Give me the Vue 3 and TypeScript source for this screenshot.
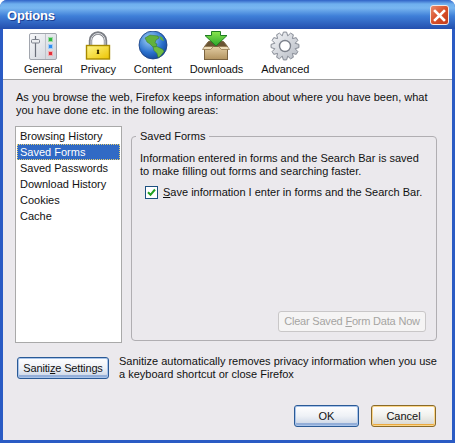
<template>
  <div class="dialog">
    <header class="titlebar">
      <span class="title">Options</span>
      <button class="close" aria-label="Close">
        <svg width="13" height="13" viewBox="0 0 13 13">
          <path d="M2 2l9 9M11 2l-9 9" stroke="#fff" stroke-width="2.6" stroke-linecap="square" />
        </svg>
      </button>
    </header>

    <div class="client">
      <nav class="toolbar">
        <div class="tool">
          <svg width="30" height="30" viewBox="0 0 30 30">
            <defs>
              <linearGradient id="panel" x1="0" y1="0" x2="1" y2="1">
                <stop offset="0" stop-color="#f8f9fb" />
                <stop offset="1" stop-color="#ccd0d8" />
              </linearGradient>
            </defs>
            <rect x="1.500" y="2.500" width="27" height="26" rx="1.500" fill="url(#panel)" stroke="#a2a6ae" />
            <path d="M17.500 3v25" stroke="#c0c3ca" />
            <path d="M7.500 5v21" stroke="#6a6f7a" stroke-width="1.200" />
            <rect x="3.500" y="8.500" width="8" height="3.500" rx="1" fill="#eceef1" stroke="#7c818b" />
            <rect x="20.500" y="6.500" width="4" height="4" fill="#2fb83f" stroke="#9fd8a6" />
            <rect x="20.500" y="13.500" width="4" height="4" fill="#2e8cf0" stroke="#a4cdf4" />
            <rect x="20.500" y="20.500" width="4" height="4" fill="#e2303a" stroke="#f0aeb2" />
          </svg>
          <span>General</span>
        </div>
        <div class="tool">
          <svg width="30" height="30" viewBox="0 0 30 30">
            <defs>
              <linearGradient id="lock" x1="0" y1="0" x2="1" y2="1">
                <stop offset="0" stop-color="#fff68a" />
                <stop offset="1" stop-color="#ecc400" />
              </linearGradient>
            </defs>
            <path d="M7.500 15V9.500a7.500 7.500 0 0 1 15 0V15" fill="none" stroke="#7c7f85" stroke-width="3.400" />
            <path d="M8 15V9.500a7 7 0 0 1 14 0V15" fill="none" stroke="#dcdee2" stroke-width="1" />
            <rect x="3.500" y="14.500" width="23" height="13.500" fill="url(#lock)" stroke="#a88a00" stroke-width="1.400" />
            <path d="M15 18.500a1.200 1.200 0 0 1 .8 2.100l.6 2.400h-2.800l.6-2.400a1.200 1.200 0 0 1 .8-2.100z" fill="#3c3000" />
          </svg>
          <span>Privacy</span>
        </div>
        <div class="tool">
          <svg width="30" height="30" viewBox="0 0 30 30">
            <defs>
              <radialGradient id="sea" cx=".38" cy=".3" r=".8">
                <stop offset="0" stop-color="#a4d4f8" />
                <stop offset=".6" stop-color="#2a70cc" />
                <stop offset="1" stop-color="#123c8c" />
              </radialGradient>
            </defs>
            <circle cx="15" cy="14" r="14" fill="url(#sea)" stroke="#1c3f7f" stroke-width=".8" />
            <path d="M7 7l5-3 8 1 1 2-3 2-1 3 2 1-1 3-3 0-3-3-3-2z" fill="#62b23c" stroke="#33752b" stroke-width=".5" />
            <path d="M15 16l4-.5 6 3 1 2-4 5-2 1-1-4-3-3z" fill="#70bc42" stroke="#33752b" stroke-width=".5" />
            <path d="M21 5l3 1 2 4-3-1z" fill="#62b23c" />
          </svg>
          <span>Content</span>
        </div>
        <div class="tool">
          <svg width="30" height="30" viewBox="0 0 30 30">
            <defs>
              <linearGradient id="box" x1="0" y1="0" x2="0" y2="1">
                <stop offset="0" stop-color="#e3cda4" />
                <stop offset="1" stop-color="#b2935f" />
              </linearGradient>
              <linearGradient id="arrow" x1="0" y1="0" x2="0" y2="1">
                <stop offset="0" stop-color="#8ae64e" />
                <stop offset="1" stop-color="#2aa52a" />
              </linearGradient>
            </defs>
            <rect x="3.500" y="15.500" width="23" height="13" fill="url(#box)" stroke="#7a6340" />
            <path d="M3.500 15.500l4-5h15l4 5z" fill="#6a5433" stroke="#7a6340" />
            <path d="M3.500 15.500l-2 3h8l3-3zM26.500 15.500l2 3h-8l-3-3z" fill="#ecdcb8" stroke="#8a7048" stroke-width=".7" />
            <path d="M10.500 .500h9v4h6.500L15 15 4 4.500h6.500z" fill="url(#arrow)" stroke="#1f7d22" />
          </svg>
          <span>Downloads</span>
        </div>
        <div class="tool">
          <svg width="30" height="30" viewBox="0 0 30 30">
            <defs>
              <linearGradient id="steel" x1="0" y1="0" x2="1" y2="1">
                <stop offset="0" stop-color="#f6f7f9" />
                <stop offset="1" stop-color="#b4b9c2" />
              </linearGradient>
            </defs>
            <path :d="gearPath" fill="url(#steel)" stroke="#858a94" stroke-width="1" />
            <circle cx="15" cy="15" r="5.500" fill="#fff" stroke="#7c818b" stroke-width="1.400" />
          </svg>
          <span>Advanced</span>
        </div>
      </nav>

      <main class="body">
        <p class="intro">
          As you browse the web, Firefox keeps information about where you have been, what<br />
          you have done etc. in the following areas:
        </p>

        <div class="columns">
          <ul class="listbox">
            <li v-for="item in items" :key="item" :class="{ selected: item === 'Saved Forms' }">{{ item }}</li>
          </ul>

          <section class="group">
            <h4 class="legend">Saved Forms</h4>
            <p class="group-text">
              Information entered in forms and the Search Bar is saved<br />
              to make filling out forms and searching faster.
            </p>
            <label class="check">
              <span class="box">
                <svg width="9" height="9" viewBox="0 0 9 9">
                  <path d="M1 4.200l2.500 2.600L8 1.500" fill="none" stroke="#21a121" stroke-width="2" />
                </svg>
              </span>
              <span><u>S</u>ave information I enter in forms and the Search Bar.</span>
            </label>
            <div class="group-actions">
              <button class="btn disabled" disabled>Clear Saved <u>F</u>orm Data Now</button>
            </div>
          </section>
        </div>

        <div class="sanitize">
          <button class="btn focused sanitize-btn">Saniti<u>z</u>e Settings</button>
          <p>
            Sanitize automatically removes privacy information when you use<br />
            a keyboard shortcut or close Firefox
          </p>
        </div>

        <footer class="footer">
          <button class="btn focused action">OK</button>
          <button class="btn hot action">Cancel</button>
        </footer>
      </main>
    </div>
  </div>
</template>

<script setup lang="ts">
const items: string[] = [
  'Browsing History',
  'Saved Forms',
  'Saved Passwords',
  'Download History',
  'Cookies',
  'Cache',
]

// gear outline, 12 teeth
function buildGear(teeth: number, outer: number, inner: number): string {
  const pts: string[] = []
  const step = (Math.PI * 2) / teeth
  for (let i = 0; i < teeth; i++) {
    const a = i * step - Math.PI / 2
    const offsets: [number, number][] = [
      [-0.5, inner],
      [-0.22, outer],
      [0.22, outer],
      [0.5, inner],
    ]
    for (const [o, r] of offsets) {
      const t = a + o * step
      pts.push(`${(15 + Math.cos(t) * r).toFixed(2)} ${(15 + Math.sin(t) * r).toFixed(2)}`)
    }
  }
  return 'M' + pts.join('L') + 'Z'
}

const gearPath = buildGear(12, 14, 10.5)
</script>

<style scoped>
.dialog {
  width: 455px;
  height: 443px;
  display: flex;
  flex-direction: column;
  font-family: "Liberation Sans", Arial, sans-serif;
  font-size: 11px;
  line-height: 13px;
  color: #111;
  background: #2a5bc4;
  border-radius: 7px 7px 0 0;
  overflow: hidden;
  white-space: nowrap;
}

.titlebar {
  height: 29px;
  flex-shrink: 0;
  box-sizing: border-box;
  display: flex;
  align-items: center;
  justify-content: space-between;
  padding: 3px 6px 2px 7px;
  background: linear-gradient(#2f62c6 0, #6fb0ee 4px, #78b6f0 8px, #3f7fd8 16px, #234fae 29px);
}

.title {
  color: #fff;
  font-weight: bold;
  font-size: 13px;
  letter-spacing: -0.2px;
  text-shadow: 1px 1px 0 #1c3f92;
}

.close {
  width: 19px;
  height: 20px;
  padding: 0;
  display: flex;
  align-items: center;
  justify-content: center;
  background: linear-gradient(135deg, #e98a6a, #d8502a 50%, #c23c1c);
  border: 1px solid #f2e8e4;
  border-radius: 3px;
}

.client {
  flex: 1;
  display: flex;
  flex-direction: column;
  margin: 0 3px 3px;
  background: #ebe9ed;
  min-height: 0;
}

.toolbar {
  height: 51px;
  flex-shrink: 0;
  display: flex;
  gap: 18px;
  padding: 2px 0 0 21px;
  background: #fff;
  border-bottom: 1px solid #a0a0a0;
  box-sizing: border-box;
}

.tool {
  display: flex;
  flex-direction: column;
  align-items: center;
  gap: 0;
  letter-spacing: -0.1px;
}

.tool svg {
  display: block;
  margin-bottom: 2px;
}

.body {
  flex: 1;
  display: flex;
  flex-direction: column;
  padding: 10px 13px 13px 12px;
  min-height: 0;
}

.intro {
  margin: 1px 0 0 1px;
}

.columns {
  display: flex;
  gap: 9px;
  margin-top: 9px;
  height: 217px;
}

.listbox {
  width: 107px;
  margin: 0;
  padding: 1px;
  list-style: none;
  box-sizing: border-box;
  background: #fff;
  border: 1px solid #a9a9a9;
}

.listbox li {
  height: 16px;
  line-height: 16px;
  padding-left: 3px;
}

.listbox li.selected {
  background: #316ac5;
  color: #fff;
  outline: 1px dotted #e8d070;
  outline-offset: -1px;
}

.group {
  position: relative;
  width: 306px;
  height: 205px;
  margin-top: 10px;
  padding: 15px 8px 8px;
  box-sizing: border-box;
  display: flex;
  flex-direction: column;
  border: 1px solid #b0aeb2;
  border-radius: 4px;
}

.legend {
  position: absolute;
  top: -7px;
  left: 4px;
  margin: 0;
  padding: 0 4px;
  font-weight: normal;
  font-size: 11px;
  line-height: 13px;
  background: #ebe9ed;
}

.group-text {
  margin: 0;
}

.check {
  display: flex;
  align-items: center;
  gap: 5px;
  margin: 8px 0 0 5px;
}

.box {
  width: 13px;
  height: 13px;
  box-sizing: border-box;
  display: flex;
  align-items: center;
  justify-content: center;
  background: #fff;
  border: 1px solid #1c5180;
}

.group-actions {
  margin-top: auto;
  display: flex;
  justify-content: flex-end;
  padding-right: 2px;
}

.btn {
  font: inherit;
  color: #111;
  padding: 0;
  height: 22px;
  box-sizing: border-box;
  border-radius: 3px;
  border: 1px solid #003c74;
  background: linear-gradient(#fefefe 0, #f2f2ee 45%, #d6d5cf 100%);
}

.btn.focused {
  border-color: #2a5a96;
  box-shadow: inset 0 0 0 1px #a9c4ea, inset 0 -3px 0 #93aed8;
  background: linear-gradient(#fff 0, #eef1f6 50%, #c6d2e4 100%);
}

.btn.hot {
  border-color: #8a6a28;
  box-shadow: inset 0 0 0 1px #fbd68a, inset 0 -2px 0 #eba93e;
}

.btn.disabled {
  width: 148px;
  height: 21px;
  color: #a5a4a2;
  letter-spacing: -0.2px;
  background: #f5f4f4;
  border-color: #c9c7c8;
}

.sanitize {
  display: flex;
  align-items: center;
  gap: 10px;
  margin: 12px 0 0 2px;
}

.sanitize-btn {
  width: 92px;
  letter-spacing: -0.15px;
}

.sanitize p {
  margin: 0;
}

.footer {
  margin-top: auto;
  display: flex;
  justify-content: flex-end;
  gap: 12px;
  padding-right: 3px;
}

.action {
  width: 65px;
}
</style>

<style>
html, body {
  margin: 0;
  background: #fff;
}
</style>
